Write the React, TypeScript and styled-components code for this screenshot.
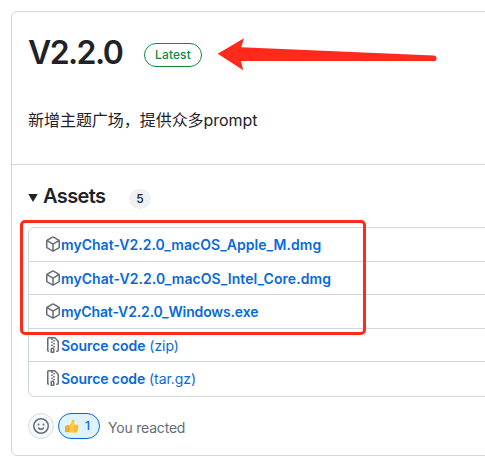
import React from "react";
import styled, { createGlobalStyle } from "styled-components";

const GlobalStyle = createGlobalStyle`
  * { box-sizing: border-box; }
  body {
    margin: 0;
    background: #fff;
    color: #1f2328;
    overflow: hidden;
    font-family: Inter, "Noto Sans CJK SC", sans-serif;
  }
`;

const Page = styled.main`
  width: 485px;
  height: 465px;
  padding: 11px 0 0 11px;
  overflow: hidden;
`;

const Card = styled.article`
  position: relative;
  width: 520px;
  height: 445px;
  border: 1px solid #d0d7de;
  border-radius: 6px;
`;

const Release = styled.section`
  height: 153px;
  padding: 19px 16px 0;
  border-bottom: 1px solid #d0d7de;
`;

const TitleRow = styled.div`
  display: flex;
  align-items: center;
  height: 44px;
`;

const Title = styled.h1`
  width: 116px;
  margin: 0;
  font-size: 32px;
  line-height: 44px;
  font-weight: 600;
  letter-spacing: -1.6px;
  white-space: nowrap;
`;

const Latest = styled.span`
  width: 58px;
  height: 24px;
  margin-top: 4px;
  border: 1px solid #128a3e;
  border-radius: 12px;
  color: #128a3e;
  font-size: 12px;
  line-height: 22px;
  font-weight: 500;
  letter-spacing: 0.1px;
  text-align: center;
`;

const Notes = styled.p`
  margin: 33px 0 0;
  font-size: 16px;
  line-height: 24px;
  letter-spacing: -0.04px;
  white-space: nowrap;
`;

const AssetsHeading = styled.div`
  display: flex;
  align-items: center;
  height: 30px;
  margin: 16px 0 0 16px;
`;

const Triangle = styled.svg`
  width: 10px;
  height: 8px;
  margin-top: 4px;
  fill: #1f2328;
`;

const AssetsTitle = styled.h2`
  width: 86px;
  margin: 0 0 0 5px;
  font-size: 20px;
  line-height: 30px;
  font-weight: 600;
  letter-spacing: -0.6px;
`;

const Counter = styled.span`
  width: 22px;
  height: 20px;
  margin-top: 6px;
  border-radius: 10px;
  background: #eff1f3;
  font-size: 12px;
  line-height: 20px;
  font-weight: 500;
  text-align: center;
`;

const AssetList = styled.ul`
  width: 487px;
  height: 170px;
  margin: 16px 0 0 16px;
  padding: 0;
  border: 1px solid #d0d7de;
  border-radius: 6px;
  list-style: none;
`;

const AssetRow = styled.li<{ $height: number }>`
  display: flex;
  align-items: flex-start;
  height: ${(p) => p.$height}px;
  padding: 8px 0 0 16px;
  & + & {
    border-top: 1px solid #d0d7de;
  }
`;

const Icon = styled.svg`
  flex: none;
  width: 16px;
  height: 16px;
  fill: #656d76;
`;

const AssetLink = styled.a<{ $spacing: number }>`
  color: #0969da;
  font-size: 14px;
  line-height: 18px;
  font-weight: 600;
  letter-spacing: ${(p) => p.$spacing}px;
  white-space: pre;
`;

const Format = styled.span`
  font-weight: 400;
`;

const Reactions = styled.div`
  display: flex;
  align-items: center;
  margin: 16px 0 0 16px;
`;

const SmileButton = styled.button`
  display: grid;
  place-items: center;
  width: 26px;
  height: 26px;
  padding: 0;
  border: 1px solid #d8dee4;
  border-radius: 50%;
  background: #f6f8fa;
`;

const ThumbButton = styled.button`
  display: flex;
  align-items: center;
  width: 42px;
  height: 26px;
  margin-left: 4px;
  padding: 0 0 0 6px;
  border: 1px solid #0969da;
  border-radius: 13px;
  background: #ddf4ff;
  color: #0969da;
  font: 500 12px/24px Inter, sans-serif;
`;

const Thumb = styled.svg`
  width: 14px;
  height: 15px;
  margin-right: 6px;
`;

const Reacted = styled.span`
  margin: 3px 0 0 8px;
  color: #656d76;
  font-size: 14px;
  line-height: 20px;
  letter-spacing: -0.2px;
`;

const Highlight = styled.div`
  position: absolute;
  left: 8px;
  top: 208px;
  width: 346px;
  height: 115px;
  border: 3px solid #ff2a1c;
  border-radius: 5px;
`;

const Arrow = styled.svg`
  position: absolute;
  left: 205px;
  top: 25px;
  width: 222px;
  height: 36px;
  fill: #ff2a1c;
`;

const PackageIcon = () => (
  <Icon viewBox="0 0 16 16">
    <path d="m8.878.392 5.25 3.045c.54.314.872.89.872 1.514v6.098a1.75 1.75 0 0 1-.872 1.514l-5.25 3.045a1.75 1.75 0 0 1-1.756 0l-5.25-3.045A1.75 1.75 0 0 1 1 11.049V4.951c0-.624.332-1.201.872-1.514L7.122.392a1.75 1.75 0 0 1 1.756 0ZM7.875 1.69l-4.63 2.685L8 7.133l4.755-2.758-4.63-2.685a.248.248 0 0 0-.25 0ZM2.5 5.677v5.372c0 .09.047.171.125.216l4.625 2.683V8.432Zm6.25 8.271 4.625-2.683a.25.25 0 0 0 .125-.216V5.677L8.75 8.432Z" />
  </Icon>
);

const ZipIcon = () => (
  <Icon viewBox="0 0 16 16">
    <path d="M3.5 1.75v11.5c0 .09.048.173.126.217a.75.75 0 0 1-.752 1.298A1.748 1.748 0 0 1 2 13.25V1.75C2 .784 2.784 0 3.75 0h5.586c.464 0 .909.185 1.237.513l2.914 2.914c.329.328.513.773.513 1.237v8.586A1.75 1.75 0 0 1 12.25 15h-.5a.75.75 0 0 1 0-1.5h.5a.25.25 0 0 0 .25-.25V4.664a.25.25 0 0 0-.073-.177L9.513 1.573a.25.25 0 0 0-.177-.073H7.25a.75.75 0 0 1 0 1.5h-.5a.75.75 0 0 1 0-1.5h-3a.25.25 0 0 0-.25.25Z" />
    <path fillRule="evenodd" d="M7.25 10.5h.5c.966 0 1.75.784 1.75 1.75v3a.75.75 0 0 1-.75.75h-2.5a.75.75 0 0 1-.75-.75v-3c0-.966.784-1.75 1.75-1.75ZM7 12v2.5h1v-2.25A.25.25 0 0 0 7.75 12Z" />
    <path d="M6.75 4.5h.5a.75.75 0 0 1 0 1.5h-.5a.75.75 0 0 1 0-1.5Zm0 3h.5a.75.75 0 0 1 0 1.5h-.5a.75.75 0 0 1 0-1.5Zm2-4.5h.5a.75.75 0 0 1 0 1.5h-.5a.75.75 0 0 1 0-1.5Zm0 3h.5a.75.75 0 0 1 0 1.5h-.5a.75.75 0 0 1 0-1.5Zm0 3h.5a.75.75 0 0 1 0 1.5h-.5a.75.75 0 0 1 0-1.5Z" />
  </Icon>
);

const assets = [
  { name: "myChat-V2.2.0_macOS_Apple_M.dmg", height: 33, spacing: 0.03 },
  { name: "myChat-V2.2.0_macOS_Intel_Core.dmg", height: 33, spacing: 0.06 },
  { name: "myChat-V2.2.0_Windows.exe", height: 34, spacing: -0.14 },
  { name: "Source code", format: "(zip)", height: 33, spacing: -0.06 },
  { name: "Source code", format: "(tar.gz)", height: 35, spacing: -0.08 },
];

export default function App() {
  return (
    <Page>
      <GlobalStyle />
      <Card>
        <Release>
          <TitleRow>
            <Title>V2.2.0</Title>
            <Latest>Latest</Latest>
          </TitleRow>
          <Notes>新增主题广场，提供众多prompt</Notes>
        </Release>
        <AssetsHeading>
          <Triangle viewBox="0 0 10 8"><path d="M.3 0h9.4L5 8Z" /></Triangle>
          <AssetsTitle>Assets</AssetsTitle>
          <Counter>5</Counter>
        </AssetsHeading>
        <AssetList>
          {assets.map((a) => (
            <AssetRow key={a.name + (a.format ?? "")} $height={a.height}>
              {a.format ? <ZipIcon /> : <PackageIcon />}
              <AssetLink $spacing={a.spacing}>
                {a.name}
                {a.format && <Format> {a.format}</Format>}
              </AssetLink>
            </AssetRow>
          ))}
        </AssetList>
        <Reactions>
          <SmileButton aria-label="Add reaction">
            <Icon viewBox="0 0 16 16">
              <circle cx="8" cy="8" r="7.25" fill="none" stroke="#656d76" strokeWidth="1.5" />
              <circle cx="5.5" cy="6.5" r="1" />
              <circle cx="10.5" cy="6.5" r="1" />
              <path d="M5.5 10c1.2 1.6 3.8 1.6 5 0" fill="none" stroke="#656d76" strokeWidth="1.5" strokeLinecap="round" />
            </Icon>
          </SmileButton>
          <ThumbButton>
            <Thumb viewBox="0 0 14 15">
              <path d="M.4 7.2 4 6.4C6 5 6.7 3.2 7 1.3 7.3.2 9 .3 9.4 1.5c.4 1.3 0 2.8-.5 4h3.4c1.3 0 1.7 1.5.7 2.2.9.6.8 1.8-.1 2.2.6.8.3 1.8-.6 2.1.3 1-.3 1.7-1.4 1.8H7.4c-1.6 0-2.6-.7-3.8-.9H.4Z" fill="#ffc83d" />
              <path d="M.4 7.2 4 6.4v6.5H.4ZM8.9 7.7H13M8.8 9.9h4M8.7 12h3.4" fill="#f4ad2b" stroke="#d88a18" strokeWidth=".5" strokeOpacity=".7" />
            </Thumb>
            1
          </ThumbButton>
          <Reacted>You reacted</Reacted>
        </Reactions>
        <Highlight />
        <Arrow viewBox="217 37 222 36">
          <path d="M217.7 53.7 244 38.3 241.2 47.2 433.5 55.4Q436.6 55.6 436.6 58.4 436.6 61 433.5 61H240.8L243.3 70.2Z" />
        </Arrow>
      </Card>
    </Page>
  );
}
